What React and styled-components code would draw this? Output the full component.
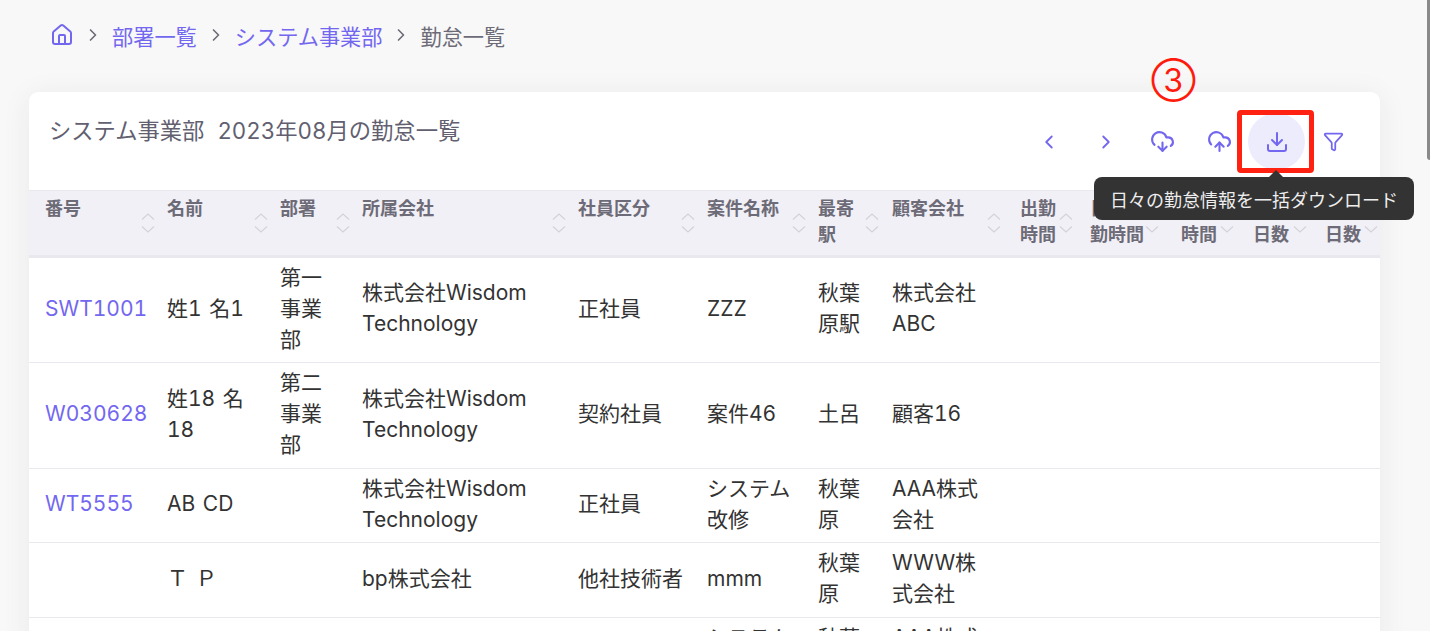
import React from 'react';
import styled, { createGlobalStyle } from 'styled-components';
import { House, ChevronRight, ChevronLeft, CloudDownload, CloudUpload, Download, Filter } from 'lucide-react';

const COLUMNS = [
  { title: '番号', width: 126, sortOffset: 0 },
  { title: '名前', width: 113, sortOffset: 0 },
  { title: '部署', width: 82, sortOffset: 0 },
  { title: '所属会社', width: 216, sortOffset: 0 },
  { title: '社員区分', width: 129, sortOffset: 0 },
  { title: '案件名称', width: 111, sortOffset: 0 },
  { title: '最寄駅', width: 74, sortOffset: 1 },
  { title: '顧客会社', width: 128, sortOffset: 7 },
  { title: '出勤時間', width: 70, sortOffset: 5 },
  { title: '日祝出勤時間', width: 91, sortOffset: 10 },
  { title: '残業時間', width: 72, sortOffset: 7 },
  { title: '出勤日数', width: 72, sortOffset: 6 },
  { title: '欠勤日数', width: 67, sortOffset: 2 },
];

const ROWS = [
  { id: 'SWT1001', name: '姓1 名1', dept: '第一事業部', company: '株式会社Wisdom Technology', type: '正社員', project: 'ZZZ', station: '秋葉原駅', client: '株式会社ABC' },
  { id: 'W030628', name: '姓18 名18', dept: '第二事業部', company: '株式会社Wisdom Technology', type: '契約社員', project: '案件46', station: '土呂', client: '顧客16' },
  { id: 'WT5555', name: 'AB CD', dept: '', company: '株式会社Wisdom Technology', type: '正社員', project: 'システム改修', station: '秋葉原', client: 'AAA株式会社' },
  { id: '', name: 'Ｔ Ｐ', dept: '', company: 'bp株式会社', type: '他社技術者', project: 'mmm', station: '秋葉原', client: 'WWW株式会社' },
  { id: '', name: '', dept: '', company: '', type: '', project: 'システム改修', station: '秋葉原', client: 'AAA株式会社' },
];

function SortIcon({ offset }) {
  return (
    <SortMark $offset={offset} width="14" height="24" viewBox="0 0 14 24" fill="none">
      <path d="M1 8.5L7 3l6 5.5M1 15.5L7 21l6-5.5" stroke="#d3d2da" strokeWidth="1.2" />
    </SortMark>
  );
}

export default function App() {
  return (
    <Page>
      <GlobalStyle />
      <ScrollThumb />
      <Breadcrumb>
        <Crumb><House size={24} strokeWidth={2} /></Crumb>
        <Separator><ChevronRight size={20} /></Separator>
        <Crumb>部署一覧</Crumb>
        <Separator><ChevronRight size={20} /></Separator>
        <Crumb>システム事業部</Crumb>
        <Separator><ChevronRight size={20} /></Separator>
        <CurrentCrumb>勤怠一覧</CurrentCrumb>
      </Breadcrumb>

      <Card>
        <CardHeader>
          <CardTitle>システム事業部 2023年08月の勤怠一覧</CardTitle>
          <Toolbar>
            <IconButton><ChevronLeft size={22} /></IconButton>
            <IconButton><ChevronRight size={22} /></IconButton>
            <IconButton>
              <CircledNumber>③</CircledNumber>
              <CloudDownload size={25} />
            </IconButton>
            <IconButton><CloudUpload size={25} /></IconButton>
            <IconButton $active>
              <Download size={24} />
              <Highlight />
              <Tooltip>日々の勤怠情報を一括ダウンロード</Tooltip>
            </IconButton>
            <IconButton><Filter size={21} /></IconButton>
          </Toolbar>
        </CardHeader>

        <Table>
          <colgroup>
            {COLUMNS.map((col) => <col key={col.title} style={{ width: col.width }} />)}
          </colgroup>
          <thead>
            <tr>
              {COLUMNS.map((col) => (
                <HeadCell key={col.title}>
                  {col.title}
                  <SortIcon offset={col.sortOffset} />
                </HeadCell>
              ))}
            </tr>
          </thead>
          <tbody>
            {ROWS.map((row, i) => (
              <tr key={i}>
                <Cell><IdLink>{row.id}</IdLink></Cell>
                <Cell>{row.name}</Cell>
                <Cell>{row.dept}</Cell>
                <Cell>{row.company}</Cell>
                <Cell>{row.type}</Cell>
                <Cell>{row.project}</Cell>
                <Cell>{row.station}</Cell>
                <Cell>{row.client}</Cell>
                <Cell /><Cell /><Cell /><Cell /><Cell />
              </tr>
            ))}
          </tbody>
        </Table>
      </Card>
    </Page>
  );
}

const GlobalStyle = createGlobalStyle`
  html, body {
    margin: 0;
    height: 100%;
    overflow: hidden;
    background: #f8f8f8;
  }
  body {
    font-family: Inter, "Noto Sans CJK JP", sans-serif;
    font-feature-settings: "tnum";
  }
`;

const Page = styled.div`
  position: relative;
  height: 631px;
  overflow: hidden;
  padding: 0 50px 0 29px;
  box-sizing: content-box;
  width: 1351px;
`;

const ScrollThumb = styled.div`
  position: absolute;
  top: 0;
  right: 0;
  width: 3px;
  height: 160px;
  background: #8a8a8a;
  border-bottom-left-radius: 3px;
`;

const Breadcrumb = styled.nav`
  display: flex;
  align-items: center;
  height: 70px;
  margin-bottom: 22px;
  padding-left: 21px;
  font-size: 21.2px;
`;

const Crumb = styled.span`
  display: flex;
  align-items: center;
  color: #7367f0;
`;

const CurrentCrumb = styled.span`
  color: #6d6b77;
`;

const Separator = styled.span`
  display: flex;
  align-items: center;
  justify-content: center;
  width: 38px;
  color: #6d6b77;
`;

const Card = styled.section`
  background: #fff;
  border-radius: 9px 9px 0 0;
  box-shadow: 0 4px 30px rgba(47, 43, 61, 0.07);
  height: 560px;
`;

const CardHeader = styled.header`
  display: flex;
  justify-content: space-between;
  height: 98px;
  padding: 21px 18px 0 20px;
  box-sizing: border-box;
`;

const CardTitle = styled.h2`
  margin: 0;
  font-size: 22.3px;
  font-weight: 400;
  line-height: 36px;
  word-spacing: 7px;
  color: #625f70;
`;

const Toolbar = styled.div`
  display: flex;
  align-items: flex-start;
`;

const IconButton = styled.button`
  position: relative;
  display: flex;
  align-items: center;
  justify-content: center;
  width: 57px;
  height: 57px;
  padding: 0;
  border: 0;
  border-radius: 50%;
  color: #7367f0;
  background: ${(p) => (p.$active ? '#edecfd' : 'transparent')};
  font-family: inherit;
`;

const Highlight = styled.span`
  position: absolute;
  top: -3px;
  left: -11px;
  right: -9px;
  bottom: -3px;
  border: 5px solid #ff2212;
  border-radius: 4px;
`;

const CircledNumber = styled.span`
  position: absolute;
  left: calc(50% + 11px);
  top: -32px;
  transform: translate(-50%, -50%);
  font-size: 32px;
  font-weight: 400;
  line-height: 1;
  color: #ff1a0d;
`;

const Tooltip = styled.span`
  position: absolute;
  z-index: 3;
  top: 64px;
  left: -154px;
  width: 320px;
  height: 43px;
  display: flex;
  align-items: center;
  justify-content: center;
  border-radius: 8px;
  background: #333;
  color: #eee;
  font-size: 18px;
  white-space: nowrap;

  &::before {
    content: '';
    position: absolute;
    top: -7px;
    left: 175px;
    border-style: solid;
    border-width: 0 7px 7px;
    border-color: transparent transparent #333;
  }
`;

const Table = styled.table`
  width: 1351px;
  table-layout: fixed;
  border-collapse: separate;
  border-spacing: 0;
`;

const HeadCell = styled.th`
  position: relative;
  height: 68px;
  box-sizing: border-box;
  padding: 5px 12px 0;
  vertical-align: top;
  text-align: left;
  font-size: 18px;
  font-weight: 700;
  line-height: 26px;
  color: #6d6b77;
  background: #f1f0f6;
  border-top: 1px solid #e9e8ef;
  border-bottom: 3px solid #e9e8ef;

  &:first-child {
    padding-left: 16px;
  }
`;

const SortMark = styled.svg`
  position: absolute;
  top: 20px;
  right: ${(p) => p.$offset}px;
`;

const Cell = styled.td`
  padding: 5px 12px 7px;
  box-sizing: content-box;
  vertical-align: middle;
  font-size: 21px;
  line-height: 30.8px;
  word-spacing: 2px;
  color: #333;
  border-bottom: 1px solid #e9e8ef;

  &:first-child {
    padding-left: 16px;
    padding-right: 0;
  }
`;

const IdLink = styled.a`
  color: #7367f0;
`;
